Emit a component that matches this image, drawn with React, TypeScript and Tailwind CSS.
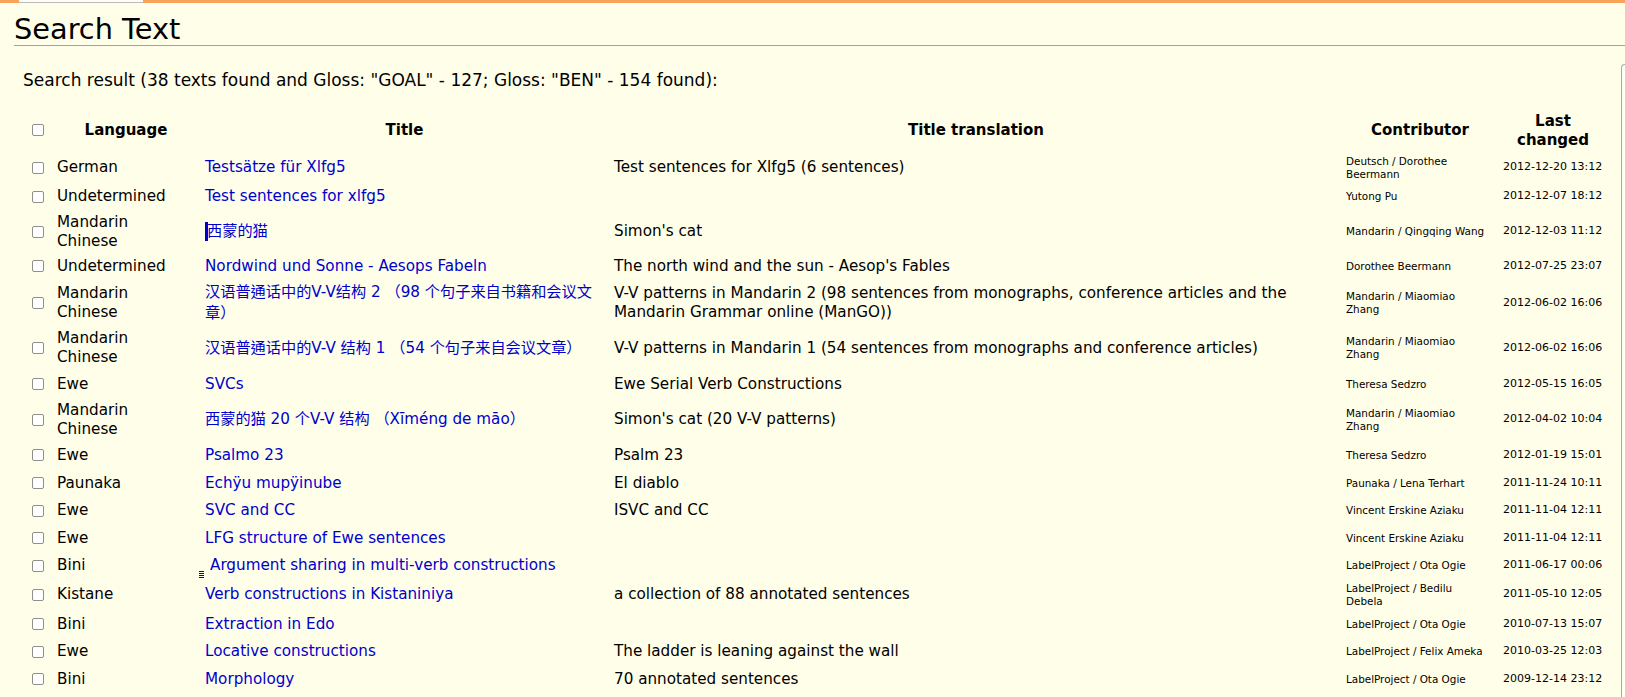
const rows: { l: string[]; t: string; tr?: string; c: string[]; d: string; h: string }[] = [
  { l: ["German"], t: "Testsätze für Xlfg5", tr: "Test sentences for Xlfg5 (6 sentences)", c: ["Deutsch / Dorothee", "Beermann"], d: "2012-12-20 13:12", h: "h-[29px]" },
  { l: ["Undetermined"], t: "Test sentences for xlfg5", c: ["Yutong Pu"], d: "2012-12-07 18:12", h: "h-[29px]" },
  { l: ["Mandarin", "Chinese"], t: "西蒙的猫", tr: "Simon's cat", c: ["Mandarin / Qingqing Wang"], d: "2012-12-03 11:12", h: "h-[41px]" },
  { l: ["Undetermined"], t: "Nordwind und Sonne - Aesops Fabeln", tr: "The north wind and the sun - Aesop's Fables", c: ["Dorothee Beermann"], d: "2012-07-25 23:07", h: "h-[28px]" },
  { l: ["Mandarin", "Chinese"], t: "汉语普通话中的V-V结构 2 （98 个句子来自书籍和会议文章）", tr: "V-V patterns in Mandarin 2 (98 sentences from monographs, conference articles and the Mandarin Grammar online (ManGO))", c: ["Mandarin / Miaomiao", "Zhang"], d: "2012-06-02 16:06", h: "h-[46px]" },
  { l: ["Mandarin", "Chinese"], t: "汉语普通话中的V-V 结构 1 （54 个句子来自会议文章）", tr: "V-V patterns in Mandarin 1 (54 sentences from monographs and conference articles)", c: ["Mandarin / Miaomiao", "Zhang"], d: "2012-06-02 16:06", h: "h-[44px]" },
  { l: ["Ewe"], t: "SVCs", tr: "Ewe Serial Verb Constructions", c: ["Theresa Sedzro"], d: "2012-05-15 16:05", h: "h-[28px]" },
  { l: ["Mandarin", "Chinese"], t: "西蒙的猫 20 个V-V 结构 （Xīméng de māo）", tr: "Simon's cat (20 V-V patterns)", c: ["Mandarin / Miaomiao", "Zhang"], d: "2012-04-02 10:04", h: "h-[43px]" },
  { l: ["Ewe"], t: "Psalmo 23", tr: "Psalm 23", c: ["Theresa Sedzro"], d: "2012-01-19 15:01", h: "h-[28px]" },
  { l: ["Paunaka"], t: "Echÿu mupÿinube", tr: "El diablo", c: ["Paunaka / Lena Terhart"], d: "2011-11-24 10:11", h: "h-[28px]" },
  { l: ["Ewe"], t: "SVC and CC", tr: "ISVC and CC", c: ["Vincent Erskine Aziaku"], d: "2011-11-04 12:11", h: "h-[27px]" },
  { l: ["Ewe"], t: "LFG structure of Ewe sentences", c: ["Vincent Erskine Aziaku"], d: "2011-11-04 12:11", h: "h-[28px]" },
  { l: ["Bini"], t: "Argument sharing in multi-verb constructions", c: ["LabelProject / Ota Ogie"], d: "2011-06-17 00:06", h: "h-[27px]" },
  { l: ["Kistane"], t: "Verb constructions in Kistaniniya", tr: "a collection of 88 annotated sentences", c: ["LabelProject / Bedilu", "Debela"], d: "2011-05-10 12:05", h: "h-[31px]" },
  { l: ["Bini"], t: "Extraction in Edo", c: ["LabelProject / Ota Ogie"], d: "2010-07-13 15:07", h: "h-[28px]" },
  { l: ["Ewe"], t: "Locative constructions", tr: "The ladder is leaning against the wall", c: ["LabelProject / Felix Ameka"], d: "2010-03-25 12:03", h: "h-[27px]" },
  { l: ["Bini"], t: "Morphology", tr: "70 annotated sentences", c: ["LabelProject / Ota Ogie"], d: "2009-12-14 23:12", h: "h-[28px]" },
];

function Box() {
  return <span className="block w-[12px] h-[12px] rounded-[2px] border border-[#8f8f8f] bg-white" />;
}

function Grip() {
  return (
    <span className="relative">
      <svg className="absolute left-[-6px] top-[15px]" width="5" height="8" viewBox="0 0 5 8">
        <path d="M0 .5H5M0 2.5H5M0 4.5H5M0 6.5H5" stroke="#0000cc" strokeWidth="1" fill="none" />
      </svg>
    </span>
  );
}

export default function App() {
  return (
    <div className="w-[1625px] h-[697px] overflow-hidden relative bg-[#fffee9] text-black font-['DejaVu_Sans','Noto_Sans_CJK_TC',sans-serif]">
      <div className="h-[3px] bg-[#f7a35c] pl-[19px]">
        <div className="w-[124px] h-[3px] bg-[#fdfdf5] border-b border-[#bbbbbb]" />
      </div>
      <div className="pl-[14px]">
        <h1 className="h-[43px] text-[28.8px] leading-[52px] border-b border-[#a0a0a0]">Search Text</h1>
        <p className="pl-[9px] mt-[24px] text-[17px] leading-[20px]">Search result (38 texts found and Gloss: "GOAL" - 127; Gloss: "BEN" - 154 found):</p>
        <table className="ml-[18px] mt-[17px] table-fixed border-collapse w-[1571px]">
          <colgroup>
            <col className="w-[25px]" />
            <col className="w-[148px]" />
            <col className="w-[409px]" />
            <col className="w-[732px]" />
            <col className="w-[157px]" />
            <col className="w-[100px]" />
          </colgroup>
          <thead>
            <tr className="h-[46px] text-[15px] leading-[19px] font-bold text-center">
              <th className="p-0"><Box /></th>
              <th className="p-0 pr-[10px]">Language</th>
              <th className="p-0 pr-[10px]">Title</th>
              <th className="p-0 pr-[8px]">Title translation</th>
              <th className="p-0 pr-[9px]">Contributor</th>
              <th className="p-0 pt-[2px]">Last<br />changed</th>
            </tr>
          </thead>
          <tbody>
            {rows.map((r, i) => (
              <tr key={i} className={r.h}>
                <td className="p-0"><Box /></td>
                <td className="p-0 text-[15.2px] leading-[19px]">{r.l.map((x, j) => <div key={j}>{x}</div>)}</td>
                <td className="p-0 pr-[8px] text-[15.2px] leading-[21px] text-[#0000cc]">
                  {i === 2 ? <><span className="inline-block w-[3px] h-[19px] align-middle bg-[#0000cc] mr-[-1px]" />{r.t}</> : null}
                  {i === 12 ? <><Grip /><span className="pl-[5px]">{r.t}</span></> : null}
                  {i !== 2 && i !== 12 ? r.t : null}
                </td>
                <td className="p-0 pr-[8px] text-[15.2px] leading-[19px]">{r.tr}</td>
                <td className="p-0 text-[10.4px] leading-[13px]">{r.c.map((x, j) => <div key={j}>{x}</div>)}</td>
                <td className="p-0 text-[11px] whitespace-nowrap">{r.d}</td>
              </tr>
            ))}
          </tbody>
        </table>
      </div>
      <div className="absolute left-[1621px] top-[64px] w-[8px] h-[640px] rounded-tl-[4px] border-l border-t border-[#a8a8a8] bg-[#fffff4]" />
    </div>
  );
}
